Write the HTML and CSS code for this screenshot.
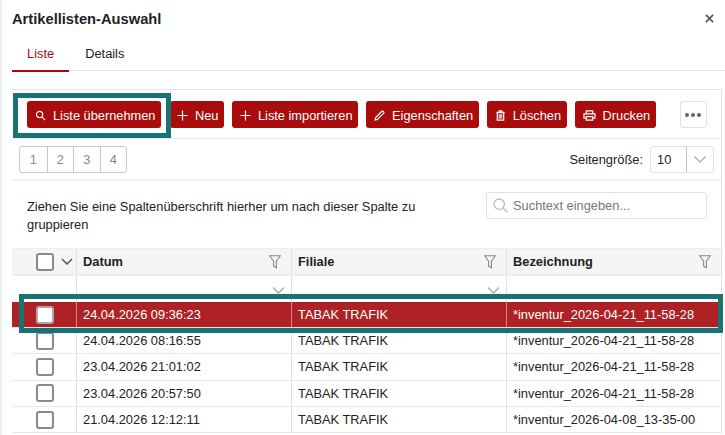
FILE: index.html
```html
<!DOCTYPE html>
<html lang="de">
<head>
    <meta charset="UTF-8">
    <meta name="viewport" content="width=device-width, initial-scale=1.0">
    <title>Artikellisten-Auswahl</title>
    <link rel="stylesheet" href="styles.css">
</head>
<body>
    <div class="dialog">
        <!-- Title -->
        <div class="dialog-head">
            <h1 class="dialog-title">Artikellisten-Auswahl</h1>
            <svg class="close-icon" viewBox="0 0 10 10"><path d="M1 1l8 8M9 1l-8 8"/></svg>
        </div>

        <!-- Tabs -->
        <div class="tabs">
            <a class="tab active">Liste</a>
            <a class="tab">Details</a>
        </div>

        <div class="panel">
            <!-- Toolbar -->
            <div class="toolbar">
                <button class="btn first">
                    <svg class="icon" viewBox="0 0 12 12"><circle cx="5" cy="5" r="3.4"/><path d="M7.5 7.5l3.6 3.6"/></svg>
                    Liste übernehmen
                </button>
                <button class="btn small">
                    <svg class="icon" viewBox="0 0 12 12"><path d="M6 .5v11M.5 6h11"/></svg>
                    Neu
                </button>
                <button class="btn">
                    <svg class="icon" viewBox="0 0 12 12"><path d="M6 .5v11M.5 6h11"/></svg>
                    Liste importieren
                </button>
                <button class="btn">
                    <svg class="icon" viewBox="0 0 12 12"><path d="M1.2 10.8l.6-2.6L8.6 1.4a.9.9 0 0 1 1.3 0l.7.7a.9.9 0 0 1 0 1.3L3.8 10.2z"/></svg>
                    Eigenschaften
                </button>
                <button class="btn">
                    <svg class="icon" viewBox="0 0 12 12"><path d="M2.5 3h7v8h-7zM1.5 2.6h9M4.5 2.5V1h3v1.5"/><path class="fill" d="M4 4.500h4v5H4z"/></svg>
                    Löschen
                </button>
                <button class="btn">
                    <svg class="icon print" viewBox="0 0 14 12"><path d="M3.500 4V1h7v3M3.500 9H1V4.200h12V9h-2.500M3.500 7.200h7V11h-7z"/></svg>
                    Drucken
                </button>
                <button class="btn-more"><span></span><span></span><span></span></button>
            </div>

            <!-- Pager -->
            <div class="pager-row">
                <div class="pager">
                    <span>1</span><span>2</span><span>3</span><span>4</span>
                </div>
                <div class="page-size">
                    <label>Seitengröße:</label>
                    <div class="select">
                        <span class="select-value">10</span>
                        <span class="select-arrow"><svg class="chevron" viewBox="0 0 12 7"><path d="M.5.5L6 6 11.500.5"/></svg></span>
                    </div>
                </div>
            </div>

            <!-- Group panel -->
            <div class="group-row">
                <p class="group-hint">Ziehen Sie eine Spaltenüberschrift hierher um nach dieser Spalte zu gruppieren</p>
                <div class="search">
                    <svg class="search-icon" viewBox="0 0 15 15"><circle cx="6.200" cy="6.200" r="5.200"/><path d="M10 10l4.300 4.300"/></svg>
                    <span>Suchtext eingeben...</span>
                </div>
            </div>

            <!-- Grid -->
            <div class="grid">
                <div class="row head">
                    <div class="cell select-cell">
                        <span class="check"></span>
                        <svg class="head-chevron" viewBox="0 0 12 7"><path d="M1 1l5 5 5-5"/></svg>
                    </div>
                    <div class="cell">Datum<svg class="filter" viewBox="0 0 13 15"><path d="M.7.7h11.600L8 6.500v7.300L5 12V6.500z"/></svg></div>
                    <div class="cell">Filiale<svg class="filter" viewBox="0 0 13 15"><path d="M.7.7h11.600L8 6.500v7.300L5 12V6.500z"/></svg></div>
                    <div class="cell">Bezeichnung<svg class="filter" viewBox="0 0 13 15"><path d="M.7.7h11.600L8 6.500v7.300L5 12V6.500z"/></svg></div>
                </div>
                <div class="row filter-row">
                    <div class="cell"></div>
                    <div class="cell"><svg class="chevron wide" viewBox="0 0 12 7"><path d="M.5.5L6 6 11.500.5"/></svg></div>
                    <div class="cell"><svg class="chevron wide" viewBox="0 0 12 7"><path d="M.5.5L6 6 11.500.5"/></svg></div>
                    <div class="cell"></div>
                </div>
                <div class="row selected">
                    <div class="cell select-cell"><span class="check"></span></div>
                    <div class="cell">24.04.2026 09:36:23</div>
                    <div class="cell">TABAK TRAFIK</div>
                    <div class="cell">*inventur_2026-04-21_11-58-28</div>
                </div>
                <div class="row">
                    <div class="cell select-cell"><span class="check"></span></div>
                    <div class="cell">24.04.2026 08:16:55</div>
                    <div class="cell">TABAK TRAFIK</div>
                    <div class="cell">*inventur_2026-04-21_11-58-28</div>
                </div>
                <div class="row">
                    <div class="cell select-cell"><span class="check"></span></div>
                    <div class="cell">23.04.2026 21:01:02</div>
                    <div class="cell">TABAK TRAFIK</div>
                    <div class="cell">*inventur_2026-04-21_11-58-28</div>
                </div>
                <div class="row">
                    <div class="cell select-cell"><span class="check"></span></div>
                    <div class="cell">23.04.2026 20:57:50</div>
                    <div class="cell">TABAK TRAFIK</div>
                    <div class="cell">*inventur_2026-04-21_11-58-28</div>
                </div>
                <div class="row">
                    <div class="cell select-cell"><span class="check"></span></div>
                    <div class="cell">21.04.2026 12:12:11</div>
                    <div class="cell">TABAK TRAFIK</div>
                    <div class="cell">*inventur_2026-04-08_13-35-00</div>
                </div>
            </div>
        </div>
    </div>

    <!-- Annotation frames drawn over the screenshot -->
    <div class="mark mark-button"></div>
    <div class="mark mark-row"></div>
</body>
</html>
```

FILE: styles.css
```css
html, body {
    margin: 0;
    height: 100%;
}

body {
    position: relative;
    height: 435px;
    overflow: hidden;
    background-color: white;
    color: #222;
    font-family: "Liberation Sans", Arial, sans-serif;
    font-size: 12.85px;
}

/* Dialog */
.dialog {
    height: 435px;
    padding-left: 10px;
    border-left: 2px solid #eeeeee;
}

.dialog-head {
    display: flex;
    align-items: center;
    justify-content: space-between;
    height: 37px;
    padding-right: 11px;
}

.dialog-title {
    margin: 0;
    font-size: 14.7px;
    font-weight: bold;
    color: #222;
}

.close-icon {
    width: 9px;
    height: 9px;
    fill: none;
    stroke: #555;
    stroke-width: 1.800;
}

/* Tabs */
.tabs {
    display: flex;
    height: 34px;
    box-sizing: border-box;
    border-bottom: 1px solid #e4e4e4;
}

.tab {
    box-sizing: border-box;
    height: 35px;
    padding: 9px 15px 0;
    color: #222;
}

.tab.active {
    color: #a80c0c;
    border-bottom: 2px solid #a80c0c;
}

.tab + .tab {
    padding-left: 16px;
}

/* Panel */
.panel {
    margin-top: 18px;
    border-top: 1px solid #e4e4e4;
    border-right: 1px solid #e4e4e4;
    margin-right: 3px;
}

.toolbar {
    display: flex;
    align-items: flex-start;
    height: 49px;
    box-sizing: border-box;
    padding: 11px 14px 0 15px;
    border-bottom: 1px solid #e8e8e8;
}

.btn {
    display: flex;
    align-items: center;
    gap: 7px;
    height: 27px;
    margin-right: 8px;
    padding: 1px 5.500px 0 8px;
    border: none;
    border-radius: 3px;
    background-color: #a80c0c;
    color: white;
    font: inherit;
    font-size: 12.8px;
    white-space: nowrap;
}

.btn.first {
    margin-right: 9px;
}

.btn.small {
    padding-left: 7px;
}

.icon {
    width: 11px;
    height: 11px;
    fill: none;
    stroke: white;
    stroke-width: 1.300;
}

.icon .fill {
    fill: #e6b4b4;
    stroke: none;
}

.icon.print {
    width: 13px;
}

.btn-more {
    display: flex;
    align-items: center;
    justify-content: center;
    gap: 2px;
    width: 27px;
    height: 27px;
    margin-left: 16px;
    padding: 0;
    box-sizing: border-box;
    border: 1px solid #e0e0e0;
    border-radius: 3px;
    background-color: white;
}

.btn-more span {
    width: 4px;
    height: 4px;
    border-radius: 50%;
    background-color: #666;
}

/* Pager */
.pager-row {
    display: flex;
    align-items: flex-start;
    justify-content: space-between;
    height: 42px;
    box-sizing: border-box;
    padding: 7px 7px 0 7px;
    border-bottom: 2px solid #f0f0f0;
}

.pager {
    display: flex;
    height: 27px;
    box-sizing: border-box;
    border: 1px solid #c8c8c8;
    border-radius: 3px;
}

.pager span {
    display: flex;
    align-items: center;
    justify-content: center;
    width: 26.500px;
    color: #888;
    border-left: 1px solid #c8c8c8;
    box-sizing: border-box;
}

.pager span:first-child {
    border-left: none;
}

.page-size {
    display: flex;
    align-items: center;
    gap: 7px;
    height: 27px;
}

.select {
    display: flex;
    width: 64px;
    height: 27px;
    box-sizing: border-box;
    border: 1px solid #e0e0e0;
    border-radius: 3px;
}

.select-value {
    flex: 1;
    padding-left: 6px;
    line-height: 25px;
}

.select-arrow {
    display: flex;
    align-items: center;
    justify-content: center;
    width: 26px;
    border-left: 1px solid #c0c0c0;
}

.chevron {
    width: 12px;
    height: 7px;
    fill: none;
    stroke: #aaa;
    stroke-width: 1.300;
}

.chevron.wide {
    width: 13px;
}

/* Group panel */
.group-row {
    display: flex;
    justify-content: space-between;
    height: 67px;
    box-sizing: border-box;
    padding: 11px 14px 0 15px;
}

.group-hint {
    width: 420px;
    margin: 6px 0 0;
    line-height: 18px;
}

.search {
    display: flex;
    align-items: center;
    gap: 5px;
    width: 221px;
    height: 27px;
    box-sizing: border-box;
    padding-left: 6px;
    border: 1px solid #e0e0e0;
    border-radius: 3px;
    color: #777;
}

.search-icon {
    width: 15px;
    height: 15px;
    fill: none;
    stroke: #bbb;
    stroke-width: 1.300;
}

/* Grid */
.row {
    display: grid;
    grid-template-columns: 64px 215px 215px 1fr;
    height: 26.330px;
    box-sizing: border-box;
    border-bottom: 1px solid #e8e8e8;
}

.cell {
    display: flex;
    align-items: center;
    justify-content: space-between;
    padding: 0 10px 0 6px;
    border-left: 1px solid #e0e0e0;
    white-space: nowrap;
}

.cell:first-child {
    border-left: none;
}

.select-cell {
    justify-content: flex-start;
    padding: 0 0 0 24px;
}

.check {
    flex: none;
    width: 18px;
    height: 18px;
    box-sizing: border-box;
    border: 2px solid #8a8a8a;
    border-radius: 3px;
    background-color: white;
}

.row.head {
    height: 28px;
    font-weight: bold;
    background-color: #f5f5f5;
    border-bottom: 2px solid #eeeeee;
    border-top: 1px solid #eeeeee;
}

.head-chevron {
    flex: none;
    width: 12px;
    height: 7px;
    margin-left: 7px;
    fill: none;
    stroke: #555;
    stroke-width: 1.500;
}

.filter {
    width: 12px;
    height: 14px;
    fill: none;
    stroke: #888;
    stroke-width: 1.200;
}

.row.filter-row {
    height: 26px;
    border-bottom: none;
}

.filter-row .cell {
    justify-content: flex-end;
    align-items: flex-end;
    padding-bottom: 8px;
    padding-right: 6px;
}

.row.selected {
    height: 26px;
    background-color: #ae2125;
    color: white;
    border-bottom: 1px solid #f0dcdc;
}

.row.selected .cell {
    border-left-color: #cf8a8c;
}

.row.selected .check {
    border-color: #a8a8a8;
}

/* Annotation frames */
.mark {
    position: absolute;
    box-sizing: border-box;
    border: 5px solid #1a7373;
}

.mark-button {
    left: 13px;
    top: 93px;
    width: 158px;
    height: 45px;
}

.mark-row {
    left: 19px;
    top: 294px;
    width: 704px;
    height: 39px;
}
```
